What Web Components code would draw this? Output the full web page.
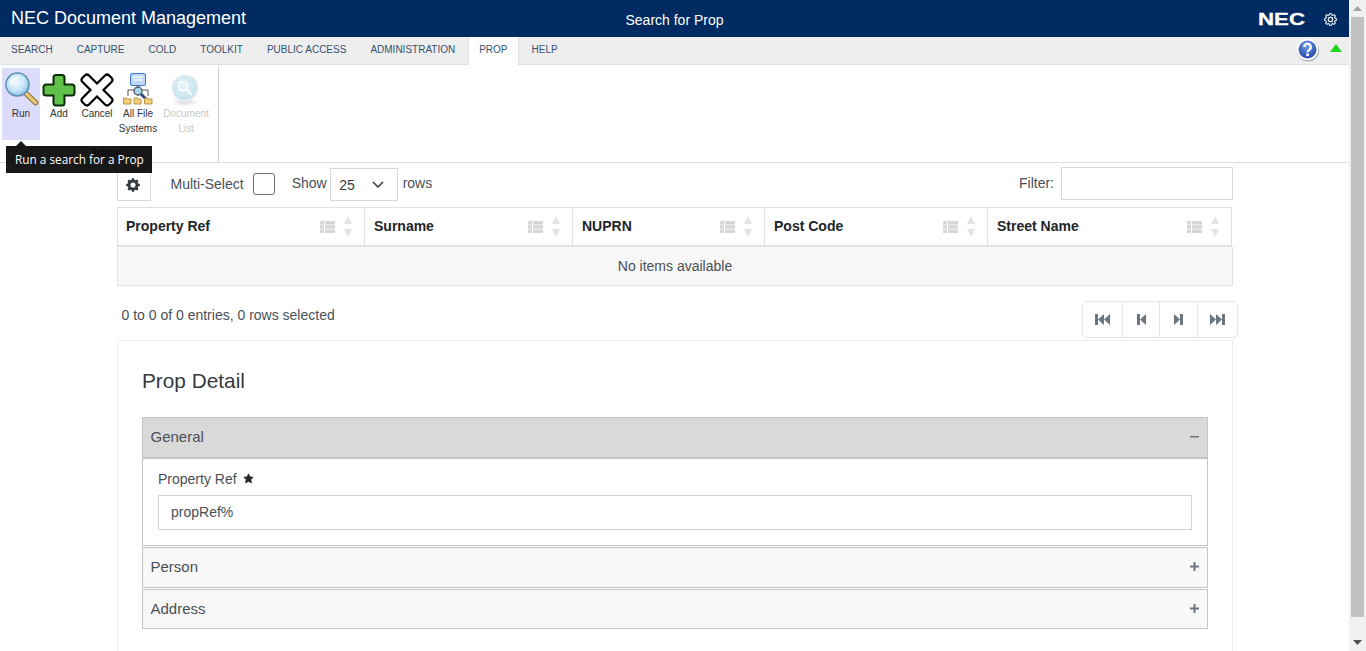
<!DOCTYPE html>
<html lang="en">
<head>
<meta charset="utf-8">
<title>NEC Document Management</title>
<style>
    html, body { margin: 0; height: 100%; overflow: hidden; background: #fff; }
    body { font: 14px "Liberation Sans", Arial, sans-serif; color: #495057; }
</style>
</head>
<body>
<app-shell>
    <app-header title-text="NEC Document Management" page-text="Search for Prop"></app-header>
    <app-tabs></app-tabs>
    <ribbon-bar>
        <ribbon-button icon="run" active tip="Run a search for a Prop">Run</ribbon-button>
        <ribbon-button icon="add">Add</ribbon-button>
        <ribbon-button icon="cancel">Cancel</ribbon-button>
        <ribbon-button icon="systems" wide>All File<br>Systems</ribbon-button>
        <ribbon-button icon="doclist" disabled>Document<br>List</ribbon-button>
    </ribbon-bar>
    <page-content>
        <grid-toolbar></grid-toolbar>
        <data-grid></data-grid>
        <grid-footer></grid-footer>
        <detail-card heading="Prop Detail">
            <accordion-panel label="General" open>
                <text-field label="Property Ref" value="propRef%"></text-field>
            </accordion-panel>
            <accordion-panel label="Person"></accordion-panel>
            <accordion-panel label="Address"></accordion-panel>
        </detail-card>
    </page-content>
</app-shell>

<script type="module">
    const GEAR_LINE = 'M8 4.754a3.246 3.246 0 1 0 0 6.492 3.246 3.246 0 0 0 0-6.492zM5.754 8a2.246 2.246 0 1 1 4.492 0 2.246 2.246 0 0 1-4.492 0zM9.796 1.343c-.527-1.79-3.065-1.79-3.592 0l-.094.319a.873.873 0 0 1-1.255.52l-.292-.16c-1.64-.892-3.433.902-2.54 2.541l.159.292a.873.873 0 0 1-.52 1.255l-.319.094c-1.79.527-1.79 3.065 0 3.592l.319.094a.873.873 0 0 1 .52 1.255l-.16.292c-.892 1.64.901 3.434 2.541 2.54l.292-.159a.873.873 0 0 1 1.255.52l.094.319c.527 1.79 3.065 1.79 3.592 0l.094-.319a.873.873 0 0 1 1.255-.52l.292.16c1.64.893 3.434-.902 2.54-2.541l-.159-.292a.873.873 0 0 1 .52-1.255l.319-.094c1.79-.527 1.79-3.065 0-3.592l-.319-.094a.873.873 0 0 1-.52-1.255l.16-.292c.893-1.64-.902-3.433-2.541-2.54l-.292.159a.873.873 0 0 1-1.255-.52l-.094-.319zm-2.633.283c.246-.835 1.428-.835 1.674 0l.094.319a1.873 1.873 0 0 0 2.693 1.115l.291-.16c.764-.415 1.6.42 1.184 1.185l-.159.292a1.873 1.873 0 0 0 1.116 2.692l.318.094c.835.246.835 1.428 0 1.674l-.319.094a1.873 1.873 0 0 0-1.115 2.693l.16.291c.415.764-.42 1.6-1.185 1.184l-.291-.159a1.873 1.873 0 0 0-2.693 1.116l-.094.318c-.246.835-1.428.835-1.674 0l-.094-.319a1.873 1.873 0 0 0-2.692-1.115l-.292.16c-.764.415-1.6-.42-1.184-1.185l.159-.291A1.873 1.873 0 0 0 1.945 8.93l-.319-.094c-.835-.246-.835-1.428 0-1.674l.319-.094A1.873 1.873 0 0 0 3.06 4.377l-.16-.292c-.415-.764.42-1.6 1.185-1.184l.292.159a1.873 1.873 0 0 0 2.692-1.115l.094-.319z';
    const GEAR_FILL = 'M9.405 1.05c-.413-1.4-2.397-1.4-2.81 0l-.1.34a1.464 1.464 0 0 1-2.105.872l-.31-.17c-1.283-.698-2.686.705-1.987 1.987l.169.311c.446.82.023 1.841-.872 2.105l-.34.1c-1.4.413-1.4 2.397 0 2.81l.34.1a1.464 1.464 0 0 1 .872 2.105l-.17.31c-.698 1.283.705 2.686 1.987 1.987l.311-.169a1.464 1.464 0 0 1 2.105.872l.1.34c.413 1.4 2.397 1.4 2.81 0l.1-.34a1.464 1.464 0 0 1 2.105-.872l.31.17c1.283.698 2.686-.705 1.987-1.987l-.169-.311a1.464 1.464 0 0 1 .872-2.105l.34-.1c1.4-.413 1.4-2.397 0-2.81l-.34-.1a1.464 1.464 0 0 1-.872-2.105l.17-.31c.698-1.283-.705-2.686-1.987-1.987l-.311.169a1.464 1.464 0 0 1-2.105-.872l-.1-.34zM8 10.93a2.929 2.929 0 1 1 0-5.86 2.929 2.929 0 0 1 0 5.858z';

    const RIBBON_ICONS = {
        run: `<svg width="34" height="34" viewBox="0 0 34 34" style="overflow:visible">
            <defs><radialGradient id="lens" cx=".42" cy=".38" r=".62"><stop offset="0" stop-color="#f4fbff"/><stop offset=".65" stop-color="#c4e4f6"/><stop offset="1" stop-color="#86bfe4"/></radialGradient></defs>
            <path d="M21.500 20l10 9.500" stroke="#8a7440" stroke-width="5.600" stroke-linecap="round"/>
            <path d="M21.500 20l10 9.500" stroke="#e8c674" stroke-width="3.400" stroke-linecap="round"/>
            <circle cx="13.500" cy="11.500" r="11.500" fill="url(#lens)" stroke="#5d8fb5" stroke-width="1.500"/>
            <path d="M7 10.500a6.500 6.500 0 0 1 5.500-5.500" fill="none" stroke="#fff" stroke-width="2" stroke-linecap="round"/>
        </svg>`,
        add: `<svg width="34" height="34" viewBox="0 0 34 34">
            <path d="M14 2h6a2.500 2.500 0 0 1 2.500 2.500V11.500H30a2.500 2.500 0 0 1 2.500 2.500v6a2.500 2.500 0 0 1-2.500 2.500H22.500V30a2.500 2.500 0 0 1-2.500 2.500h-6a2.500 2.500 0 0 1-2.500-2.500V22.500H4A2.500 2.500 0 0 1 1.500 20v-6A2.500 2.500 0 0 1 4 11.500h7.500V4.500A2.500 2.500 0 0 1 14 2z" fill="#5fc04a" stroke="#0b2b06" stroke-width="2"/>
        </svg>`,
        cancel: `<svg width="34" height="34" viewBox="0 0 34 34">
            <path d="M9 2.500l8 8 8-8a3 3 0 0 1 4.200 0l2.300 2.300a3 3 0 0 1 0 4.200l-8 8 8 8a3 3 0 0 1 0 4.200l-2.300 2.300a3 3 0 0 1-4.200 0l-8-8-8 8a3 3 0 0 1-4.200 0L2.500 29.200a3 3 0 0 1 0-4.200l8-8-8-8a3 3 0 0 1 0-4.200L4.800 2.500a3 3 0 0 1 4.200 0z" fill="#fff" stroke="#000" stroke-width="2.200"/>
        </svg>`,
        systems: `<svg width="30" height="32" viewBox="0 0 30 32">
            <rect x="7.500" y=".5" width="15" height="12" rx="1.500" fill="#bcd8f6" stroke="#3f78c9"/>
            <path d="M10 4h10M10 7h10" stroke="#f2f8ff" stroke-width="1.500"/>
            <path d="M5 23v-6h20v6M15 13v10" fill="none" stroke="#555" stroke-width="1"/>
            <path d="M18 21l6 6" stroke="#33457f" stroke-width="3"/>
            <circle cx="15" cy="18" r="4" fill="#a6d3e8" stroke="#55606b" stroke-width="1.400"/>
            <g fill="#f5cf74" stroke="#a3853f" stroke-width=".8"><path d="M.5 25h3l1 1h3.500v5H.5zM11 25h3l1 1h3v5h-7zM21.500 25h3l1 1h3.500v5h-7.500z"/></g>
        </svg>`,
        doclist: `<svg width="34" height="34" viewBox="0 0 34 34">
            <defs><radialGradient id="pale" cx=".45" cy=".4" r=".65"><stop offset="0" stop-color="#e9f5fa"/><stop offset=".75" stop-color="#c8e4ee"/><stop offset="1" stop-color="#e6e9ea"/></radialGradient><radialGradient id="shade" cx=".5" cy=".5" r=".5"><stop offset="0" stop-color="#d8d8d8"/><stop offset="1" stop-color="#fff"/></radialGradient></defs>
            <ellipse cx="16" cy="29" rx="14" ry="4.500" fill="url(#shade)"/>
            <circle cx="16" cy="15" r="13" fill="url(#pale)" stroke="#eef1f2" stroke-width="1.500"/>
            <circle cx="14" cy="13" r="4.500" fill="none" stroke="#fff" stroke-width="1.600"/>
            <path d="M17.500 16.500l5 5" stroke="#fff" stroke-width="2"/>
        </svg>`
    };

    class AppShell extends HTMLElement {
        constructor() {
            super();
            this.attachShadow({mode: 'open'}).innerHTML = `
                <style>
                    :host { display: flex; height: 651px; overflow: hidden; }
                    main { width: 1349px; flex: none; overflow: hidden; }
                </style>
                <main><slot></slot></main>
                <fake-scrollbar></fake-scrollbar>`;
        }
    }

    class FakeScrollbar extends HTMLElement {
        constructor() {
            super();
            this.attachShadow({mode: 'open'}).innerHTML = `
                <style>
                    :host { display: flex; flex-direction: column; align-items: center; width: 17px; background: #f1f1f1; }
                    .btn { height: 17px; display: flex; align-items: center; justify-content: center; }
                    .thumb { width: 13px; height: 600px; background: #c1c1c1; }
                    .track { flex: 1; }
                </style>
                <div class="btn"><svg width="9" height="5" viewBox="0 0 9 5"><path d="M0 5L4.500 0 9 5z" fill="#a3a3a3"/></svg></div>
                <div class="thumb"></div>
                <div class="track"></div>
                <div class="btn"><svg width="9" height="5" viewBox="0 0 9 5"><path d="M0 0h9L4.500 5z" fill="#505050"/></svg></div>`;
        }
    }

    class AppHeader extends HTMLElement {
        constructor() {
            super();
            this.attachShadow({mode: 'open'}).innerHTML = `
                <style>
                    :host { display: grid; grid-template-columns: 1fr auto 1fr; align-items: center; height: 37px; background: #002b62; color: #fff; }
                    .title { font-size: 18px; padding-left: 11px; }
                    .page { font-size: 14px; position: relative; top: 1px; }
                    .right { display: flex; align-items: center; justify-content: flex-end; padding-right: 12px; }
                    .logo { font-size: 16px; font-weight: 700; display: inline-block; width: 47px; transform: scaleX(1.39); transform-origin: left center; margin-right: 19px; line-height: 14px; position: relative; top: 1px; -webkit-text-stroke: .3px #fff; }
                    svg { display: block; position: relative; top: 1px; }
                </style>
                <div class="title">${this.getAttribute('title-text')}</div>
                <div class="page">${this.getAttribute('page-text')}</div>
                <div class="right">
                    <span class="logo">NEC</span>
                    <svg width="13" height="13" viewBox="0 0 16 16" fill="#fff" stroke="#fff" stroke-width=".4"><path fill-rule="evenodd" d="${GEAR_LINE}"/></svg>
                </div>`;
        }
    }

    class AppTabs extends HTMLElement {
        constructor() {
            super();
            const tabs = ['SEARCH', 'CAPTURE', 'COLD', 'TOOLKIT', 'PUBLIC ACCESS', 'ADMINISTRATION', 'PROP', 'HELP'];
            this.attachShadow({mode: 'open'}).innerHTML = `
                <style>
                    :host { display: flex; align-items: stretch; height: 27px; background: #eee; border-bottom: 1px solid #dcdfe3; font-size: 10px; color: #34506f; }
                    ul { list-style: none; display: flex; margin: 0 0 0 -1px; padding: 0; flex: 1; }
                    li { padding: 0 12px; line-height: 26px; height: 27px; box-sizing: border-box; }
                    li.active { background: #fff; height: 28px; margin: 0 1px; padding: 0 10px; border: 1px solid #dcdfe3; border-width: 0 1px; }
                    .tools { display: flex; align-items: flex-start; padding-right: 7px; gap: 10px; }
                    .help { margin-top: 1px; }
                    .up { margin-top: 7px; }
                </style>
                <ul>${tabs.map(t => `<li class="${t === 'PROP' ? 'active' : ''}">${t}</li>`).join('')}</ul>
                <div class="tools">
                    <svg class="help" width="24" height="24" viewBox="0 0 24 24">
                        <defs><radialGradient id="blue" cx=".45" cy=".3" r=".8"><stop offset="0" stop-color="#6d9ae8"/><stop offset="1" stop-color="#1e3f9e"/></radialGradient></defs>
                        <circle cx="12" cy="12.500" r="11" fill="#5a6a7e" opacity=".55"/>
                        <circle cx="11.500" cy="11.500" r="10.800" fill="#fff"/>
                        <circle cx="11.500" cy="11.500" r="9" fill="url(#blue)"/>
                        <path d="M8.200 9a3.300 3.300 0 1 1 5.200 2.700c-1.200.8-1.800 1.300-1.800 2.500" fill="none" stroke="#fff" stroke-width="2.400"/>
                        <rect x="10.300" y="15.500" width="2.600" height="2.600" fill="#fff"/>
                    </svg>
                    <svg class="up" width="12" height="8" viewBox="0 0 12 8"><path d="M0 8L6 0l6 8z" fill="#1ed31e"/></svg>
                </div>`;
        }
    }

    class RibbonBar extends HTMLElement {
        constructor() {
            super();
            this.attachShadow({mode: 'open'}).innerHTML = `
                <style>
                    :host { display: flex; height: 97px; border-bottom: 1px solid #dcdcdc; background: #fff; }
                    .group { width: 219px; box-sizing: border-box; border-right: 1px solid #d0d0d0; margin-top: 1px; padding: 2px 0 0 2px; display: flex; flex-direction: column; position: relative; }
                    .buttons { display: flex; height: 72px; }
                    .name { font-size: 10px; color: #555; text-align: center; line-height: 14px; margin-top: 6px; padding-right: 6px; }
                </style>
                <div class="group">
                    <div class="buttons"><slot></slot></div>
                    <div class="name">Actions</div>
                </div>`;
        }
    }

    class RibbonButton extends HTMLElement {
        constructor() {
            super();
            const tip = this.getAttribute('tip');
            const width = this.hasAttribute('disabled') ? 52 : this.hasAttribute('wide') ? 44 : 38;
            this.attachShadow({mode: 'open'}).innerHTML = `
                <style>
                    :host { display: flex; flex-direction: column; align-items: center; position: relative; width: ${width}px; height: 72px; padding-top: 5px; box-sizing: border-box; font-size: 10px; line-height: 15px; color: #333; text-align: center; }
                    :host([active]) { background: #dcdcfc; }
                    :host([disabled]) { color: #c8c8c8; }
                    .icon { height: 33px; display: flex; justify-content: center; }
                    .tip { position: absolute; left: 4px; top: 78px; z-index: 5; white-space: nowrap; background: #000; opacity: .9; color: #fff; font: 11.8px/27px "Open Sans", sans-serif; height: 27px; padding: 0 8px 0 9px; }
                    .tip::before { content: ""; position: absolute; left: 10px; top: -5px; border: 5px solid transparent; border-top: 0; border-bottom-color: #000; }
                </style>
                <div class="icon">${RIBBON_ICONS[this.getAttribute('icon')]}</div>
                <div><slot></slot></div>
                ${tip ? `<div class="tip">${tip}</div>` : ''}`;
        }
    }

    class PageContent extends HTMLElement {
        constructor() {
            super();
            this.attachShadow({mode: 'open'}).innerHTML = `
                <style>
                    :host { display: block; width: 1116px; margin-left: 117px; padding-top: 4px; }
                </style>
                <slot></slot>`;
        }
    }

    class GridToolbar extends HTMLElement {
        constructor() {
            super();
            this.attachShadow({mode: 'open'}).innerHTML = `
                <style>
                    :host { display: flex; align-items: flex-start; height: 34px; font-size: 14px; }
                    span { line-height: 16px; margin-top: 9px; }
                    span.up { margin-top: 8px; }
                    .gear { width: 34px; height: 33px; margin: 1px 19.5px 0 0; box-sizing: border-box; border: 1px solid #d6dade; display: flex; align-items: center; justify-content: center; padding-right: 2px; }
                    .check { width: 22px; height: 22px; box-sizing: border-box; border: 1px solid #6e6e6e; border-radius: 3px; margin: 6px 16.500px 0 9.500px; }
                    .select { width: 68px; height: 33px; box-sizing: border-box; border: 1px solid #d6dade; display: flex; align-items: center; justify-content: space-between; padding: 0 13px 0 8px; margin: 1px 4.500px 0 3.500px; color: #343a40; }
                    .select span { margin: 0; }
                    .filter { margin-left: auto; display: flex; align-items: flex-start; gap: 7px; }
                    .input { width: 172px; height: 33px; box-sizing: border-box; border: 1px solid #d6dade; }
                </style>
                <div class="gear"><svg width="14" height="14" viewBox="0 0 16 16" fill="#343a40"><path d="${GEAR_FILL}"/></svg></div>
                <span>Multi-Select</span>
                <div class="check"></div>
                <span class="up">Show</span>
                <div class="select"><span>25</span><svg width="12" height="7" viewBox="0 0 12 7"><path d="M1 1l5 5 5-5" fill="none" stroke="#343a40" stroke-width="1.500"/></svg></div>
                <span class="up">rows</span>
                <div class="filter"><span class="up">Filter:</span><div class="input"></div></div>`;
        }
    }

    class DataGrid extends HTMLElement {
        constructor() {
            super();
            const columns = [['Property Ref', 247], ['Surname', 208], ['NUPRN', 192], ['Post Code', 223], ['Street Name', 243]];
            this.attachShadow({mode: 'open'}).innerHTML = `
                <style>
                    :host { display: block; margin-top: 6px; }
                    .head { display: flex; width: 1115px; height: 40px; box-sizing: border-box; border: 1px solid #dfe2e6; border-bottom-width: 2px; }
                    .cell { flex: none; display: flex; align-items: center; justify-content: space-between; box-sizing: border-box; padding: 0 12px 2px 9px; border-right: 1px solid #dfe2e6; font-weight: 700; color: #212529; }
                    .cell:first-child { padding-left: 8px; }
                    .cell:last-child { border-right: 0; }
                    .cell span { flex: 1; }
                    .sort { display: flex; align-items: center; gap: 9px; position: relative; top: 1px; }
                    .sort svg { display: block; }
                    .empty { height: 39px; box-sizing: border-box; border: 1px solid #e2e2e2; border-top: 0; background: #f7f7f7; text-align: center; line-height: 38px; color: #495057; }
                </style>
                <div class="head">${columns.map(([name, w]) => `
                    <div class="cell" style="width:${w}px"><span>${name}</span>
                        <div class="sort">
                            <svg width="15" height="12" viewBox="0 0 15 12" fill="#d6d6d6"><path d="M0 0h4v3.500H0zM5 0h10v3.500H5zM0 4.250h4v3.500H0zM5 4.250h10v3.500H5zM0 8.500h4v3.500H0zM5 8.500h10v3.500H5z"/></svg>
                            <svg width="8" height="21" viewBox="0 0 8 21" fill="#e4e4e4"><path d="M4 0l4 8H0zM0 13h8l-4 8z"/></svg>
                        </div>
                    </div>`).join('')}
                </div>
                <div class="empty">No items available</div>`;
        }
    }

    class GridFooter extends HTMLElement {
        constructor() {
            super();
            const icons = [
                [15, 'M0 0h3v11H0zM3 5.500L9 0v11zM9 5.500L15 0v11z'],
                [9, 'M0 0h3v11H0zM3 5.500L9 0v11z'],
                [9, 'M9 0H6v11h3zM6 5.500L0 0v11z'],
                [15, 'M15 0h-3v11h3zM12 5.500L6 0v11zM6 5.500L0 0v11z']
            ];
            const widths = [40, 37, 38, 39];
            this.attachShadow({mode: 'open'}).innerHTML = `
                <style>
                    :host { display: flex; align-items: flex-start; justify-content: space-between; margin: 15px -5px 2px 0; padding-left: 4.500px; }
                    .info { padding-top: 6px; color: #495057; }
                    .pager { display: flex; height: 37px; box-sizing: border-box; border: 1px solid #e3e5e8; border-radius: 5px; }
                    .pager div { display: flex; align-items: center; justify-content: center; box-sizing: border-box; border-right: 1px solid #e3e5e8; }
                    .pager div:last-child { border-right: 0; }
                </style>
                <div class="info">0 to 0 of 0 entries, 0 rows selected</div>
                <div class="pager">${icons.map(([w, d], i) => `<div style="width:${widths[i]}px"><svg width="${w}" height="11" viewBox="0 0 ${w} 11" fill="#6c757d"><path d="${d}"/></svg></div>`).join('')}</div>`;
        }
    }

    class DetailCard extends HTMLElement {
        constructor() {
            super();
            this.attachShadow({mode: 'open'}).innerHTML = `
                <style>
                    :host { display: block; border: 1px solid #eee; padding: 27px 24px 30px; height: 340px; box-sizing: border-box; }
                    h2 { margin: 0 0 23px; font-size: 20.8px; font-weight: 400; line-height: 26px; color: #343a40; }
                </style>
                <h2>${this.getAttribute('heading')}</h2>
                <slot></slot>`;
        }
    }

    class AccordionPanel extends HTMLElement {
        constructor() {
            super();
            const open = this.hasAttribute('open');
            this.attachShadow({mode: 'open'}).innerHTML = `
                <style>
                    :host { display: block; margin-bottom: 1px; color: #495057; font-size: 15px; }
                    .bar { display: flex; align-items: center; justify-content: space-between; box-sizing: border-box; height: 41px; padding: 0 8px 2px 7.500px; border: 1px solid #c4c4c4; background: #f8f8f8; }
                    :host([label="Address"]) .bar { height: 40px; padding-bottom: 1px; }
                    :host([open]) .bar { height: 42px; background: #d9d9d9; border-bottom-width: 2px; }
                    .body { border: 1px solid #c4c4c4; border-top: 0; padding: 10px 15px 15px; font-size: 14px; }
                    svg { display: block; }
                </style>
                <div class="bar">
                    <span>${this.getAttribute('label')}</span>
                    <svg width="9" height="9" viewBox="0 0 9 9" fill="#6c757d"><path d="${open ? 'M0 4h9v1.500H0z' : 'M0 3.500h9v2H0zM3.500 0h2v9h-2z'}"/></svg>
                </div>
                ${open ? '<div class="body"><slot></slot></div>' : ''}`;
        }
    }

    class TextField extends HTMLElement {
        constructor() {
            super();
            this.attachShadow({mode: 'open'}).innerHTML = `
                <style>
                    :host { display: block; }
                    label { display: flex; align-items: center; gap: 6px; line-height: 20px; margin-bottom: 6px; }
                    label svg { margin-top: -2px; }
                    .input { height: 35px; box-sizing: border-box; border: 1px solid #ced4da; padding: 0 12px; line-height: 33px; color: #495057; }
                </style>
                <label>${this.getAttribute('label')}
                    <svg width="11" height="11" viewBox="0 0 24 24" fill="#212529" stroke="#212529" stroke-width="2" stroke-linejoin="round"><path d="M12 2l3 6.600 7 .9-5.200 4.800 1.400 7L12 17.800l-6.200 3.500 1.400-7L2 9.500l7-.9z"/></svg>
                </label>
                <div class="input">${this.getAttribute('value')}</div>`;
        }
    }

    customElements.define('app-shell', AppShell);
    customElements.define('fake-scrollbar', FakeScrollbar);
    customElements.define('app-header', AppHeader);
    customElements.define('app-tabs', AppTabs);
    customElements.define('ribbon-bar', RibbonBar);
    customElements.define('ribbon-button', RibbonButton);
    customElements.define('page-content', PageContent);
    customElements.define('grid-toolbar', GridToolbar);
    customElements.define('data-grid', DataGrid);
    customElements.define('grid-footer', GridFooter);
    customElements.define('detail-card', DetailCard);
    customElements.define('accordion-panel', AccordionPanel);
    customElements.define('text-field', TextField);
</script>
</body>
</html>
